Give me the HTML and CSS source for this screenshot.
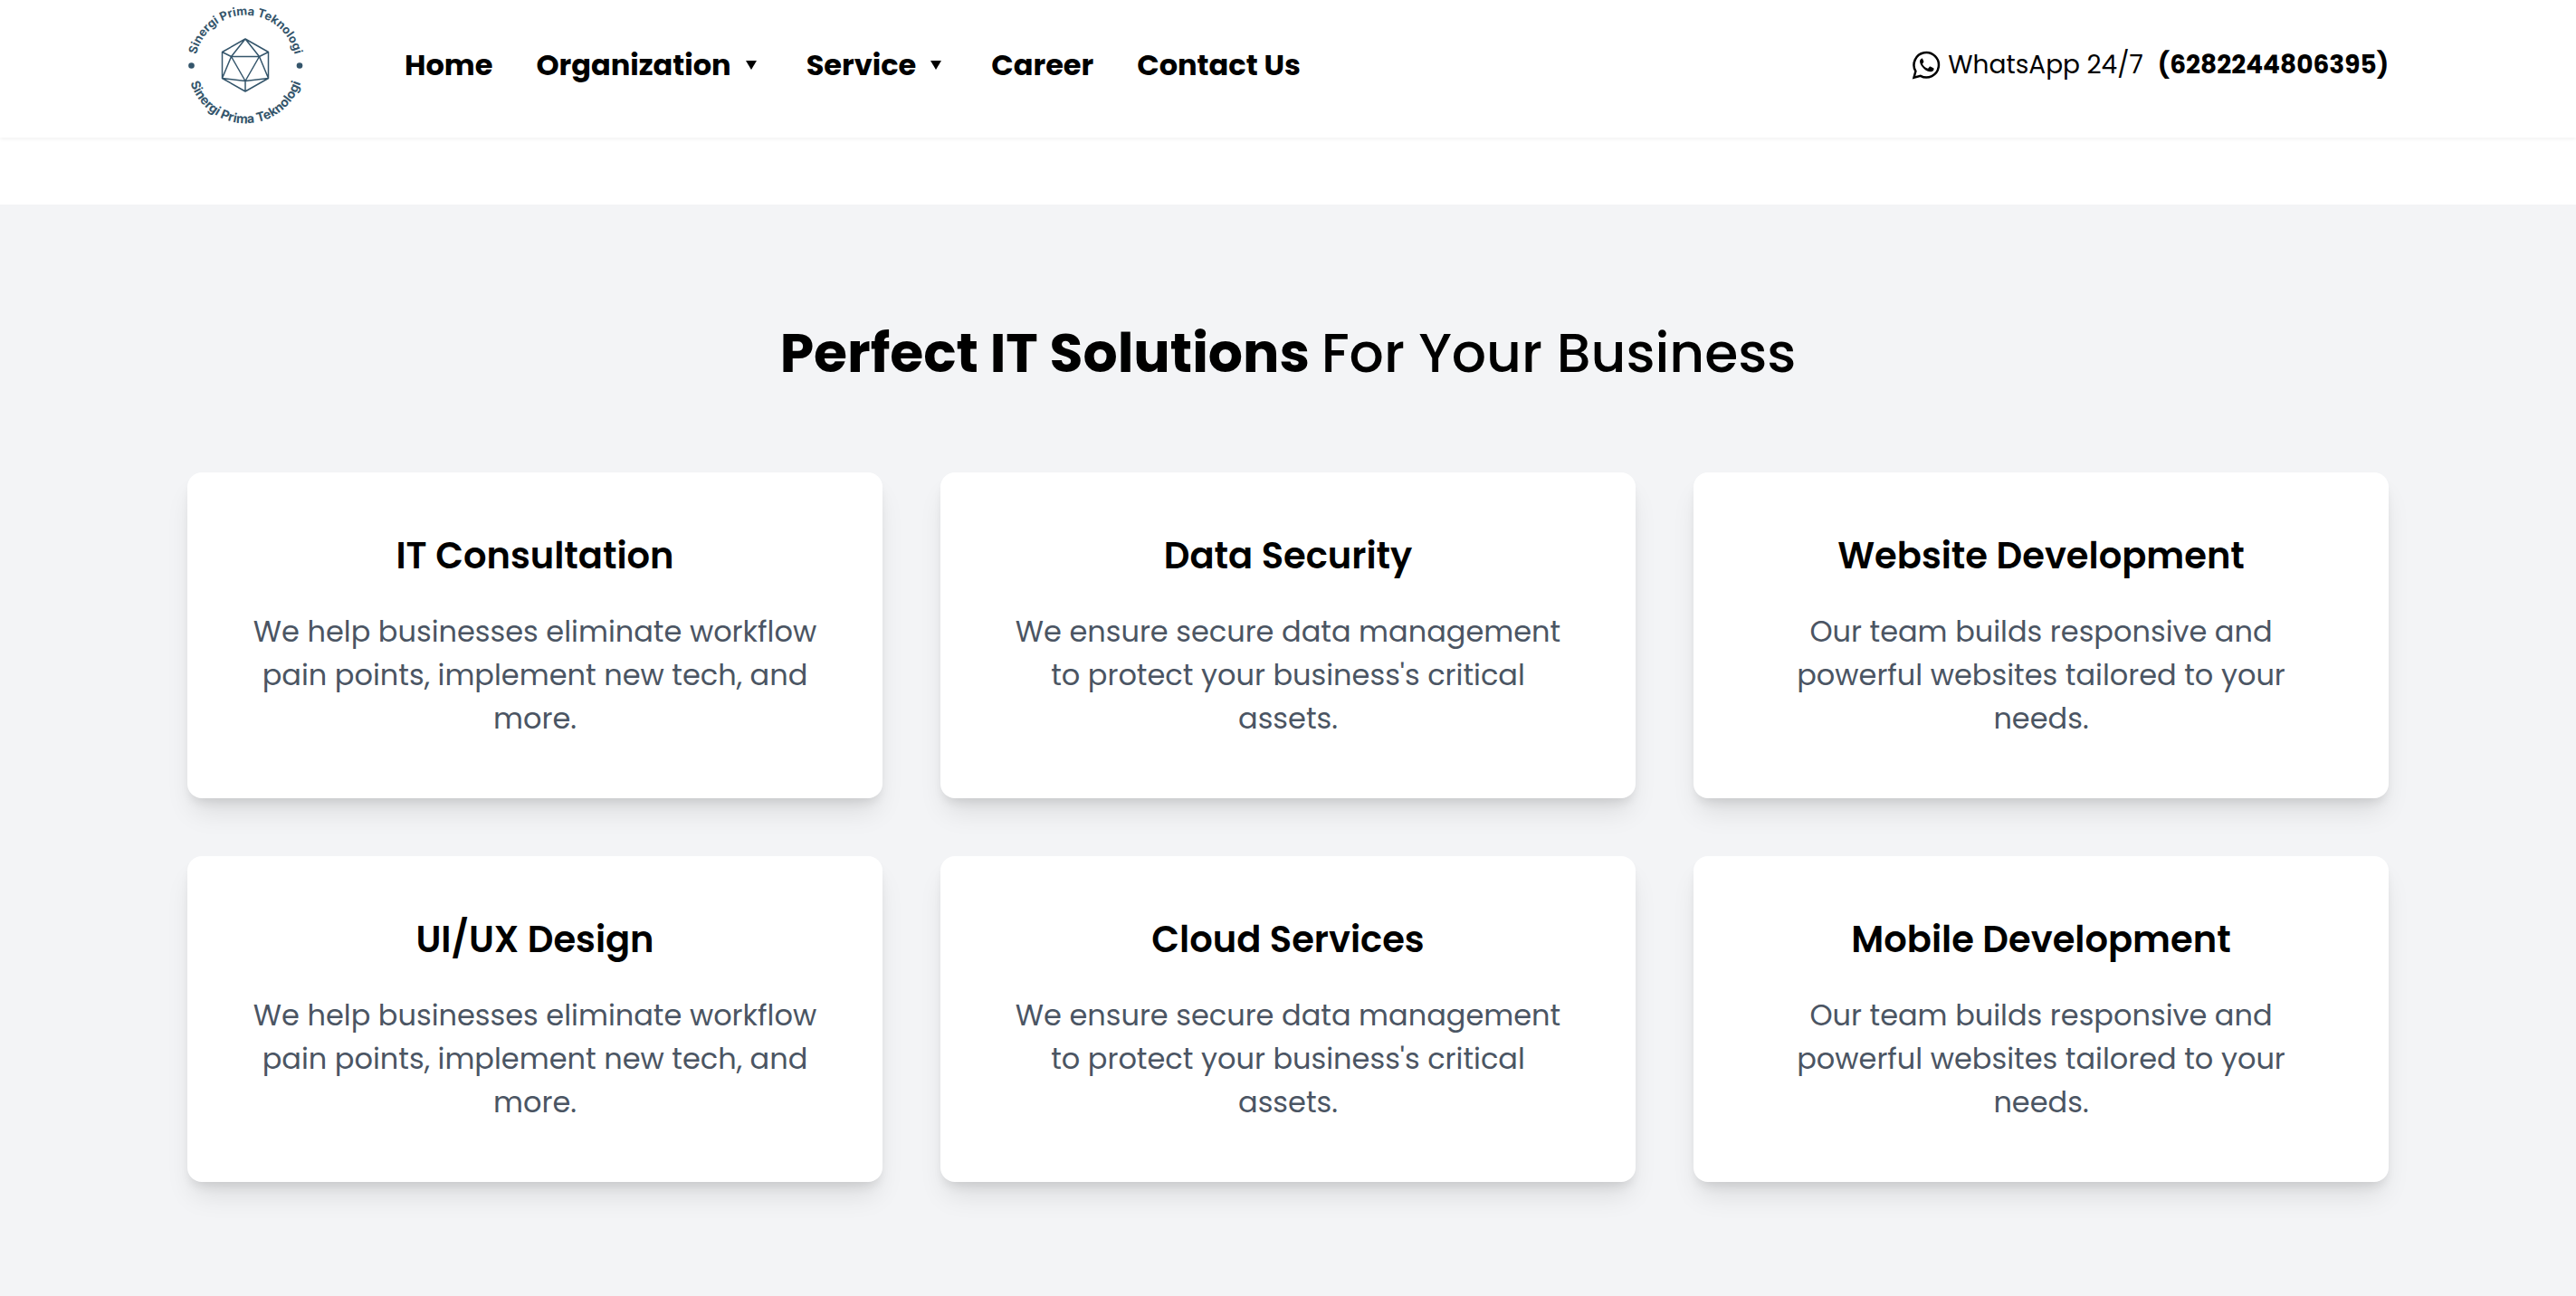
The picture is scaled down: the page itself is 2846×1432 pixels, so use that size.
FILE: index.html
```
<!DOCTYPE html>
<html lang="en">
<head>
  <meta charset="utf-8">
  <meta name="viewport" content="width=device-width, initial-scale=1">
  <title>Sinergi Prima Teknologi</title>
  <link rel="stylesheet" href="styles.css">
</head>
<body>
  <header class="site-header">
    <div class="container header-inner">
      <a class="logo" href="#" aria-label="Sinergi Prima Teknologi">
        <svg viewBox="0 0 128 128" width="128" height="128">
          <defs>
            <path id="arc-top" d="M8.500 64.500a55.750 55.750 0 0 1 111.500 0"/>
            <path id="arc-bottom" d="M0.500 64.500a63.750 63.750 0 0 0 127.500 0"/>
          </defs>
          <text class="logo-text"><textPath href="#arc-top" startOffset="50%">Sinergi Prima Teknologi</textPath></text>
          <text class="logo-text logo-text-lower"><textPath href="#arc-bottom" startOffset="50%">Sinergi Prima Teknologi</textPath></text>
          <circle class="logo-dot" cx="4.500" cy="64.500" r="3.300"/>
          <circle class="logo-dot" cx="124" cy="64.500" r="3.300"/>
          <path class="logo-mark" d="M64 35 89.500 49.500V78.500L64 93 38.500 78.500V49.500ZM64 35 48.500 54.500H79.500ZM48.500 54.500 64 81.500 79.500 54.500M38.500 49.500 48.500 54.500 38.500 78.500 64 81.500 89.500 78.500 79.500 54.500 89.500 49.500M64 81.500V93"/>
        </svg>
      </a>
      <nav class="nav">
        <a class="nav-item" href="#">Home</a>
        <button class="nav-item nav-drop" type="button">Organization<svg class="caret" viewBox="0 0 12 10" width="12" height="10"><path d="M0 0h12L6 10z"/></svg></button>
        <button class="nav-item nav-drop" type="button">Service<svg class="caret" viewBox="0 0 12 10" width="12" height="10"><path d="M0 0h12L6 10z"/></svg></button>
        <a class="nav-item" href="#">Career</a>
        <a class="nav-item" href="#">Contact Us</a>
      </nav>
      <a class="contact" href="#">
        <svg class="contact-icon" viewBox="0 0 32 32" width="32" height="32">
          <path class="bubble" d="M2.500 29.800 4.400 22.700A13.700 13.700 0 1 1 9.800 27.900Z"/>
          <path class="handset" d="M11.300 8.500C9.700 9.200 8.900 10.600 9.100 12.600c.3 2.500 1.900 5 4.500 7.400 2.600 2.300 5.200 3.400 7.600 3.300 1.800-.1 3-1.200 3.300-2.600.2-.8 0-1.200-.4-1.400l-3.400-1.700c-.5-.2-.8-.1-1.100.3l-1.300 1.600c-.3.300-.6.300-1 .1-2.300-1-4-2.600-5.200-4.700-.2-.4-.1-.7.200-1l.9-1.200c.2-.3.200-.6.100-.9l-1.300-3c-.1-.3-.3-.4-.7-.3z"/>
        </svg>
        <span class="contact-label">WhatsApp 24/7</span>
        <strong class="contact-number">(6282244806395)</strong>
      </a>
    </div>
  </header>

  <main>
    <section class="solutions">
      <div class="container">
        <h2 class="section-title"><strong>Perfect IT Solutions </strong>For Your Business</h2>
        <div class="cards">
          <article class="card">
            <h3>IT Consultation</h3>
            <p>We help businesses eliminate workflow pain points, implement new tech, and more.</p>
          </article>
          <article class="card">
            <h3>Data Security</h3>
            <p>We ensure secure data management to protect your business's critical assets.</p>
          </article>
          <article class="card">
            <h3>Website Development</h3>
            <p>Our team builds responsive and powerful websites tailored to your needs.</p>
          </article>
          <article class="card">
            <h3>UI/UX Design</h3>
            <p>We help businesses eliminate workflow pain points, implement new tech, and more.</p>
          </article>
          <article class="card">
            <h3>Cloud Services</h3>
            <p>We ensure secure data management to protect your business's critical assets.</p>
          </article>
          <article class="card">
            <h3>Mobile Development</h3>
            <p>Our team builds responsive and powerful websites tailored to your needs.</p>
          </article>
        </div>
      </div>
    </section>
  </main>
</body>
</html>
```
FILE: styles.css
```
*,
*::before,
*::after {
  box-sizing: border-box;
}

body {
  margin: 0;
  background: #fff;
  color: #000;
  font-family: Poppins, Inter, "Liberation Sans", sans-serif;
  font-size: 32px;
  line-height: 48px;
}

a {
  color: inherit;
  text-decoration: none;
}

.container {
  max-width: 2560px;
  margin: 0 auto;
  padding: 0 64px;
}

/* Header */
.site-header {
  position: relative;
  padding: 8px 0 16px;
  background: #fff;
  box-shadow: 0 2px 4px rgba(0, 0, 0, 0.05);
}

.header-inner {
  display: flex;
  align-items: center;
}

.logo {
  display: block;
  flex: none;
}

.logo svg {
  display: block;
  overflow: visible;
}

.logo-text {
  fill: #34556b;
  font: 700 13px Inter, "Liberation Sans", sans-serif;
  text-anchor: middle;
}

.logo-text-lower {
  font-size: 14px;
}

.logo-dot {
  fill: #34556b;
}

.logo-mark {
  fill: none;
  stroke: #34556b;
  stroke-width: 1.5;
  stroke-linejoin: round;
}

.nav {
  display: flex;
  gap: 48px;
  margin-left: 112px;
}

.nav-item {
  font-size: 32px;
  font-weight: 700;
  line-height: 48px;
}

.nav-drop {
  display: flex;
  align-items: center;
  padding: 0;
  border: 0;
  background: none;
  color: inherit;
  font-family: inherit;
  cursor: pointer;
}

.caret {
  margin: 0 7px 0 16px;
}

.contact {
  display: flex;
  align-items: center;
  margin-left: auto;
  font-size: 28px;
}

.contact-icon {
  flex: none;
  margin-right: 8px;
}

.contact-number {
  margin-left: 16px;
}

.bubble {
  fill: none;
  stroke: #000;
  stroke-width: 2.5;
}

/* Solutions */
.solutions {
  margin-top: 74px;
  padding: 128px 0 126px;
  background: #f3f4f6;
}

.section-title {
  margin: 0 0 96px;
  font-size: 60px;
  font-weight: 500;
  line-height: 72px;
  text-align: center;
}

.cards {
  display: grid;
  grid-template-columns: repeat(3, 1fr);
  gap: 64px;
}

.card {
  padding: 64px;
  border-radius: 16px;
  background: #fff;
  box-shadow: 0 20px 30px -6px rgba(0, 0, 0, 0.1), 0 8px 12px -4px rgba(0, 0, 0, 0.1);
  text-align: center;
}

.card h3 {
  margin: 0 0 32px;
  font-size: 40px;
  font-weight: 600;
  line-height: 56px;
}

.card p {
  margin: 0;
  color: #4b5563;
}
```
